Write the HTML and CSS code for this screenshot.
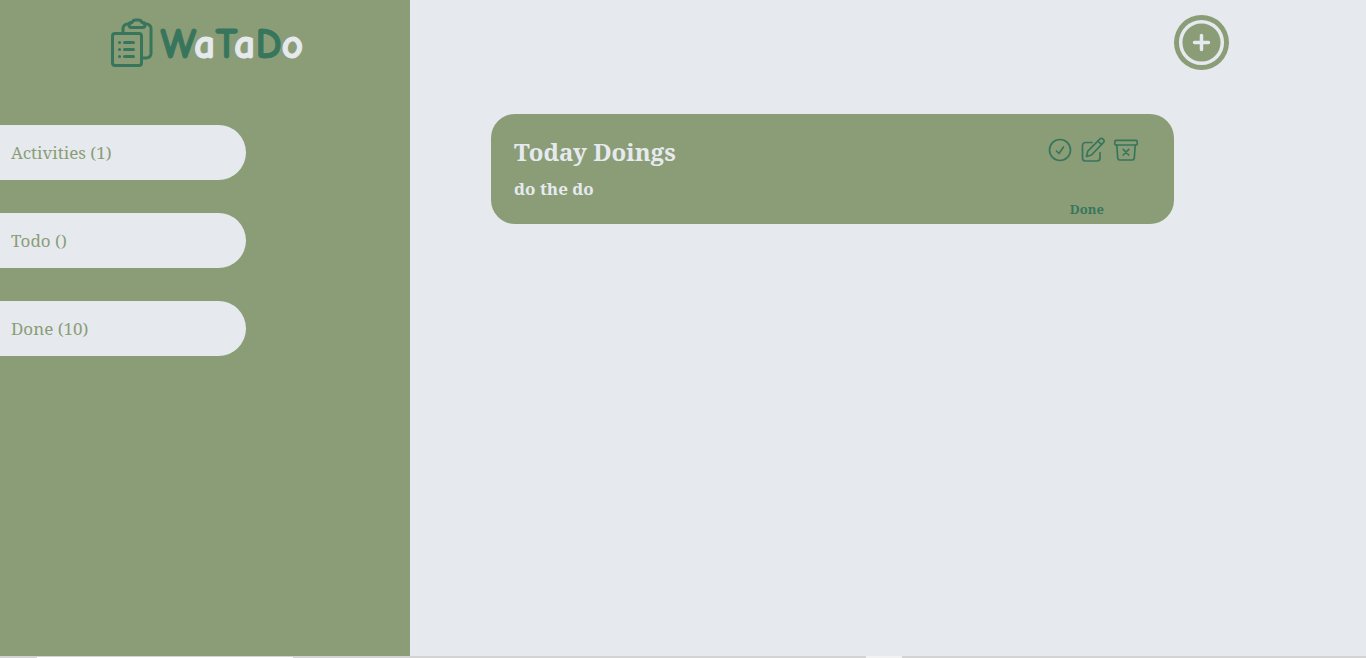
FILE: index.html
```html
<!DOCTYPE html>
<html lang="en">
<head>
<meta charset="utf-8">
<meta name="viewport" content="width=device-width, initial-scale=1">
<title>WaTaDo</title>
<link rel="stylesheet" href="styles.css">
</head>
<body>
<div class="app">
  <aside class="sidebar">
    <h1 class="brand">
      <svg class="brand-icon" viewBox="0 0 42 50" aria-hidden="true">
        <path d="M12 15V10.500a4.500 4.500 0 0 1 4.500-4.500H19M33 6h2.500a4.500 4.500 0 0 1 4.500 4.500v25a4.500 4.500 0 0 1-4.500 4.500H31"/>
        <path d="M21 9.500a2.500 2.500 0 0 1-1-5h1Q22 2 24.500 2h3Q30 2 31 4.500h1a2.500 2.500 0 0 1-1 5z"/>
        <rect x="1.500" y="15.500" width="29" height="32" rx="2.500"/>
        <path d="M13.500 24.500h9M13.500 31.500h9M13.500 38.500h9M8.500 24.500h.1M8.500 31.500h.1M8.500 38.500h.1"/>
      </svg>
      <span class="wordmark"><span class="cap">W</span>a<span class="cap">T</span>a<span class="cap">D</span>o</span>
    </h1>
    <nav class="filters" aria-label="Activities">
      <button class="filter" type="button">Activities (1)</button>
      <button class="filter" type="button">Todo ()</button>
      <button class="filter" type="button">Done (10)</button>
    </nav>
  </aside>
  <main class="content">
    <header class="toolbar">
      <button class="add" type="button" aria-label="Add activity">
        <svg viewBox="0 0 55 55" aria-hidden="true">
          <circle cx="27.500" cy="27.500" r="20.800"/>
          <path d="M27.500 20.500v14M20.500 27.500h14"/>
        </svg>
      </button>
    </header>
    <article class="card">
      <div class="card-text">
        <h2 class="title">Today Doings</h2>
        <p class="details">do the do</p>
      </div>
      <div class="card-side">
        <div class="actions">
          <button class="action" type="button" aria-label="Mark as done">
            <svg viewBox="0 0 26 26" aria-hidden="true"><circle cx="13" cy="13" r="10.500"/><path d="m9.500 14 2.500 2.500 4.500-6.500"/></svg>
          </button>
          <button class="action" type="button" aria-label="Edit">
            <svg viewBox="0 0 26 26" aria-hidden="true"><path d="M12 5.500H5.500a3 3 0 0 0-3 3V21a3 3 0 0 0 3 3H17a3 3 0 0 0 3-3v-5.500"/><path d="m6.500 19.500 1.300-5.300L19.500 2.300a2.400 2.400 0 0 1 3.800 3.400L11.500 18zM17.800 4l3.800 3.600"/></svg>
          </button>
          <button class="action" type="button" aria-label="Remove">
            <svg viewBox="0 0 26 26" aria-hidden="true"><rect x="1.800" y="3.300" width="22.400" height="4.700" rx="1"/><path d="m3.800 8 .9 13.200a2 2 0 0 0 2 1.800h12.600a2 2 0 0 0 2-1.800L22.200 8M10.200 12.400l5.600 5.600M15.800 12.400 10.200 18"/></svg>
          </button>
        </div>
        <p class="status">Done</p>
      </div>
    </article>
  </main>
</div>
<footer class="edge" aria-hidden="true"><span class="edge-field"></span><span class="edge-tab"></span></footer>
</body>
</html>
```
FILE: styles.css
```css
:root {
  --sage: #8b9d77;
  --mist: #e6eaef;
  --pine: #37765c;
}

* { box-sizing: border-box; }

body {
  display: flex;
  flex-direction: column;
  min-height: 100vh;
  margin: 0;
  background: var(--mist);
  font-family: "Noto Serif", "Droid Serif", "DejaVu Serif Condensed", "DejaVu Serif", serif;
}

h1, h2, p { margin: 0; }

button {
  padding: 0;
  border: 0;
  background: none;
  font: inherit;
  cursor: pointer;
}

svg {
  display: block;
  fill: none;
  stroke: currentColor;
  stroke-linecap: round;
  stroke-linejoin: round;
}

.app {
  display: grid;
  grid-template-columns: 30% 1fr;
  flex: 1;
}

.sidebar { background: var(--sage); }

.brand {
  display: flex;
  align-items: center;
  justify-content: center;
  gap: 8px;
  height: 85px;
  padding-left: 4px;
}

.brand-icon {
  width: 42px;
  height: 50px;
  color: var(--pine);
  stroke-width: 3;
}

.wordmark {
  padding-top: 4px;
  color: var(--mist);
  font: 700 42px/50px "Comic Neue", "Comic Sans MS", Lato, sans-serif;
  -webkit-text-stroke: 1px currentColor;
}

.cap { color: var(--pine); }

.filters {
  display: flex;
  flex-direction: column;
  gap: 33px;
  padding-top: 40px;
}

.filter {
  width: 60%;
  padding: 0 11px;
  border-radius: 0 28px 28px 0;
  background: var(--mist);
  color: var(--sage);
  font-size: 17px;
  line-height: 55px;
  text-align: left;
}

.content { padding: 15px 20.1% 0 8.5%; }

.toolbar {
  display: flex;
  justify-content: flex-end;
  margin-right: -55px;
}

.add {
  width: 55px;
  height: 55px;
  border-radius: 50%;
  background: var(--sage);
  color: var(--mist);
}

.add svg { stroke-width: 3.5; }

.card {
  display: flex;
  justify-content: space-between;
  min-height: 110px;
  margin-top: 44px;
  padding: 20px 35px 5px 23px;
  border-radius: 24px;
  background: var(--sage);
  color: var(--mist);
}

.title {
  font-size: 24px;
  line-height: 36px;
}

.details {
  padding-top: 6px;
  font-size: 17px;
  font-weight: 700;
  line-height: 26px;
}

.card-side {
  display: flex;
  flex-direction: column;
  justify-content: space-between;
  color: var(--pine);
}

.actions {
  display: flex;
  gap: 7px;
  padding-top: 3px;
}

.action {
  width: 26px;
  height: 26px;
  color: inherit;
}

.action svg { stroke-width: 1.7; }

.status {
  padding-left: 23px;
  font-size: 13px;
  font-weight: 700;
  line-height: 20px;
}

.edge {
  display: flex;
  justify-content: space-between;
  height: 2px;
  padding: 0 34% 0 37px;
  background: #d3d3d3;
}

.edge-field {
  width: 256px;
  border-top: 1px solid #d3d3d3;
  background: #fff;
}

.edge-tab {
  width: 36px;
  background: #f2f2f2;
}
```
